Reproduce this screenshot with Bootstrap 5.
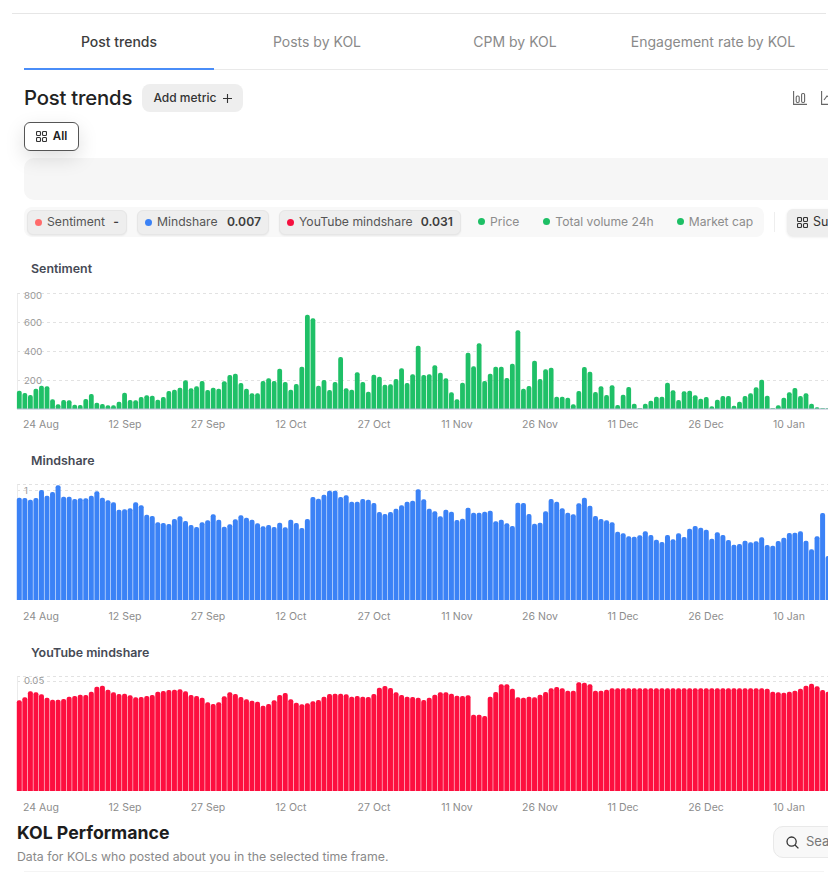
<!DOCTYPE html>
<html lang="en">
<head>
<meta charset="utf-8">
<title>Post trends</title>
<link href="https://cdn.jsdelivr.net/npm/bootstrap@5.3.0/dist/css/bootstrap.min.css" rel="stylesheet">
<style>
html,body{height:881px;overflow:hidden;background:#fff}
body{font-family:Inter,"Liberation Sans",sans-serif;color:#1f1f1f}
.page-wrap{width:828px;height:881px;overflow:hidden;padding-top:13px}
.top-rule{height:1px;background:#e6e6e6;margin-left:12px;margin-right:2px}
.tab-row{margin-left:24px;height:56px;border-bottom:1px solid #e9e9e9;flex-wrap:nowrap;gap:8px;width:1100px}
.tab-item{flex:0 0 190px;text-align:center;font-size:14px;color:#8a8a8a;line-height:55px;height:56px;white-space:nowrap}
.tab-item.on{color:#3d3d3d;font-weight:500;border-bottom:2px solid #4a8df8}
.head-row{margin:13px 0 0 24px;height:30px}
.head-title{font-size:20.3px;font-weight:500;letter-spacing:-.2px;color:#222;line-height:30px;margin:0}
.add-btn{margin-left:10px;width:101px;height:28px;padding:0;background:#eee;border:0;border-radius:8px;font-size:12px;color:#333;font-weight:500}
.add-btn:hover{background:#eee}
.view-icons{position:absolute;left:769px;top:8px;gap:14px}
.all-btn{margin:9px 0 0 24px;width:55px;height:29px;padding:0;background:#fff;border:1px solid #555;border-radius:6px;font-size:11.5px;font-weight:600;color:#222;box-shadow:0 7px 20px rgba(0,0,0,.13);position:relative;z-index:2;gap:6px}
.all-btn:hover{background:#fff;border-color:#555;color:#222}
.blank-panel{margin:7px 0 0 24px;height:42px;background:#f6f6f6;border-radius:10px 0 0 10px}
.legend-row{margin:7px 0 0 24px;width:900px;height:30px}
.legend-strip{width:740px;height:30px;background:#f8f8f8;border-radius:8px;padding-left:3px;flex:none}
.metric-chip{height:25px;background:#eee;border:1px solid #e6e6e6;border-radius:6px;font-size:12.2px;color:#555;padding:0 7px;gap:5px;box-shadow:0 1px 2px rgba(0,0,0,.06);white-space:nowrap;flex:none}
.metric-chip b{font-weight:600;color:#3d3d3d}
.chip-a{width:100px}.chip-b{width:132px;margin-left:10px}.chip-c{width:182px;margin-left:10px}
.dot-mark{width:7px;height:7px;border-radius:50%;flex:none;display:inline-block}
.plain-metric{font-size:12.1px;color:#8c8c8c;gap:5px;white-space:nowrap;flex:none}
.price-metric{margin-left:17px}.total-metric{margin-left:24px}.cap-metric{margin-left:23px}
.legend-sep{width:1px;height:20px;background:#eee;margin:0 12px 0 10px;flex:none}
.sum-chip{height:27px;background:#eee;border-radius:6px;padding:0 10px;font-size:12.5px;color:#333;gap:5px;box-shadow:0 1px 3px rgba(0,0,0,.1);flex:none}
.chart-name{font-size:12.4px;font-weight:600;color:#464a55;line-height:20px;margin:0 0 0 31px}
.chart-box{display:block;width:828px;height:147px;margin-top:6px}
.chart-box text{font-family:Inter,"Liberation Sans",sans-serif;font-size:10.5px;fill:#8d8d8d}
.chart-box text.y-tick{font-size:9.6px;fill:#9a9a9a}
.sec-one{margin-top:22px}
.sec-next{margin-top:19px}
.sec-last{margin-top:19px}
.sec-last .chart-box{margin-top:5px}
.kol-row{margin:7px 0 0 17px;width:811px;height:36px}
.kol-title{font-size:17.7px;font-weight:700;color:#1d1d1d;line-height:22px;margin:0}
.kol-sub{font-size:12.3px;color:#8a8a8a;line-height:18px;margin:4px 0 0}
.search-box{position:absolute;left:773px;top:826px;width:100px;height:32px;background:#f8f8f8;border:1px solid #e9e9e9;border-radius:10px;font-size:13px;color:#777;padding-left:12px;gap:7px}
.end-rule{height:1px;background:#f4f4f4;margin:13px 4px 0 24px}
</style>
</head>
<body>
<div class="page-wrap position-relative">
  <div class="top-rule"></div>
  <nav class="tab-row d-flex">
    <div class="tab-item on">Post trends</div>
    <div class="tab-item">Posts by KOL</div>
    <div class="tab-item">CPM by KOL</div>
    <div class="tab-item">Engagement rate by KOL</div>
    <div class="tab-item">Impression rate by KOL</div>
  </nav>

  <div class="head-row d-flex align-items-center position-relative">
    <h1 class="head-title">Post trends</h1>
    <button class="btn add-btn" type="button">Add metric&nbsp;&nbsp;<svg width="9" height="9" viewBox="0 0 9 9" fill="none" stroke="#333" stroke-width="1.1"><path d="M4.5 0v9M0 4.5h9"/></svg></button>
    <div class="view-icons d-flex">
      <svg width="14" height="14" viewBox="0 0 14 14" fill="none" stroke="#666" stroke-width="1.1"><path d="M.6 0v13.4H14"/><rect x="3.2" y="5" width="3" height="6.5" rx="1.2"/><rect x="8.6" y="2.5" width="3" height="9" rx="1.2"/></svg>
      <svg width="14" height="14" viewBox="0 0 14 14" fill="none" stroke="#666" stroke-width="1.1"><path d="M.6 0v13.4H14"/><path d="M3 9l3-4 3 2 4-4"/></svg>
    </div>
  </div>

  <button class="btn all-btn d-flex align-items-center justify-content-center" type="button">
    <svg width="11" height="11" viewBox="0 0 11 11" fill="none" stroke="#333" stroke-width="1.1"><rect x=".5" y=".5" width="4" height="4" rx="1"/><rect x="6.5" y=".5" width="4" height="4" rx="1"/><rect x=".5" y="6.5" width="4" height="4" rx="1"/><rect x="6.5" y="6.5" width="4" height="4" rx="1"/></svg>All
  </button>

  <div class="blank-panel"></div>

  <div class="legend-row d-flex align-items-center">
    <div class="legend-strip d-flex align-items-center">
      <span class="metric-chip chip-a d-inline-flex align-items-center"><i class="dot-mark" style="background:#ff6b6b"></i>Sentiment<b class="ms-auto">-</b></span>
      <span class="metric-chip chip-b d-inline-flex align-items-center"><i class="dot-mark" style="background:#3b82f6"></i>Mindshare<b class="ms-auto">0.007</b></span>
      <span class="metric-chip chip-c d-inline-flex align-items-center"><i class="dot-mark" style="background:#f5103f"></i>YouTube mindshare<b class="ms-auto">0.031</b></span>
      <span class="plain-metric price-metric d-inline-flex align-items-center"><i class="dot-mark" style="background:#1dbf65"></i>Price</span>
      <span class="plain-metric total-metric d-inline-flex align-items-center"><i class="dot-mark" style="background:#1dbf65"></i>Total volume 24h</span>
      <span class="plain-metric cap-metric d-inline-flex align-items-center"><i class="dot-mark" style="background:#1dbf65"></i>Market cap</span>
    </div>
    <span class="legend-sep"></span>
    <span class="sum-chip d-inline-flex align-items-center">
      <svg width="11" height="11" viewBox="0 0 11 11" fill="none" stroke="#333" stroke-width="1.1"><rect x=".5" y=".5" width="4" height="4" rx="1"/><rect x="6.5" y=".5" width="4" height="4" rx="1"/><rect x=".5" y="6.5" width="4" height="4" rx="1"/><rect x="6.5" y="6.5" width="4" height="4" rx="1"/></svg>Summary
    </span>
  </div>

  <section class="sec-one">
    <h2 class="chart-name">Sentiment</h2>
    <svg class="chart-box" id="c1" viewBox="0 0 828 147"></svg>
  </section>
  <section class="sec-next">
    <h2 class="chart-name">Mindshare</h2>
    <svg class="chart-box" id="c2" viewBox="0 0 828 147"></svg>
  </section>
  <section class="sec-last">
    <h2 class="chart-name">YouTube mindshare</h2>
    <svg class="chart-box" id="c3" viewBox="0 0 828 147"></svg>
  </section>

  <div class="kol-row">
    <h2 class="kol-title">KOL Performance</h2>
    <p class="kol-sub">Data for KOLs who posted about you in the selected time frame.</p>
  </div>
  <div class="search-box d-flex align-items-center">
    <svg width="13" height="13" viewBox="0 0 13 13" fill="none" stroke="#333" stroke-width="1.3"><circle cx="5.6" cy="5.6" r="4.6"/><path d="M9 9l3.4 3.4"/></svg>Search
  </div>
  <div class="end-rule"></div>
</div>

<script src="https://cdn.jsdelivr.net/npm/bootstrap@5.3.0/dist/js/bootstrap.bundle.min.js"></script>
<script>
var LABELS=[["24 Aug",41],["12 Sep",125],["27 Sep",208],["12 Oct",291],["27 Oct",374],["11 Nov",457],["26 Nov",540],["11 Dec",623],["26 Dec",706],["10 Jan",789]];
var flat=[];for(var i=0;i<27;i++)flat.push(145);
var S=[407,414,420,401,392,394,433,448,435,436,449,450,432,417,443,447,451,451,440,413,435,436,426,421,422,434,426,408,404,398,376,400,394,378,405,398,401,379,360,356,384,401,415,415,378,370,378,341,381,404,387,335,179,190,392,375,405,381,306,400,404,352,381,410,359,365,389,388,372,340,384,358,
272,360,358,331,353,370,412,433,383,293,334,265,378,356,335,335,369,326,226,401,393,317,372,343,338,425,425,428,448,408,336,350,411,394,420,391,450,419,396,446,460,446,437,425,425,383,406,435,409,407,421,431,426,454,434,423,423,452,440,423,415,397,374,422,460,451,428,412,399,423,415,446,457,460,460];
var M=[143,144,149,144,120,137,126,106,140,140,147,145,145,137,124,143,151,157,179,178,175,157,166,194,198,217,219,222,207,199,213,225,231,217,211,193,209,230,223,208,196,203,209,220,229,225,231,218,232,209,219,234,207,141,146,134,122,122,141,136,155,155,147,149,159,186,192,186,176,166,155,152,
118,148,176,184,199,179,185,210,206,173,188,188,185,182,214,209,220,228,158,159,192,221,218,184,147,155,175,188,193,160,143,167,198,207,211,217,245,250,259,260,256,244,255,269,276,255,268,250,261,236,228,233,239,266,247,255,270,284,282,272,277,274,262,285,287,273,263,249,248,244,272,298,259,189,318];
var Y=[181,172,154,157,163,173,179,179,177,170,168,164,165,155,140,137,149,157,162,161,166,172,171,168,165,155,153,150,149,148,154,165,168,173,187,192,187,169,157,162,171,178,182,185,197,192,181,165,159,178,188,193,190,184,180,170,162,161,161,163,170,168,170,171,162,143,138,144,157,165,170,171,
173,180,173,164,157,157,161,167,168,166,224,224,228,170,156,133,133,146,172,173,170,172,164,156,145,141,145,152,152,127,128,133,152,152,149].concat(flat,[145,146,155,157,158,155,152,146,137,131,139,150,155,145]);
function draw(id,zoomTop,data,color,grids,yl,baseY,labelY,axisLine,w){
  var el=document.getElementById(id),svgTop=el.getBoundingClientRect().top,s='',base=baseY-svgTop;
  grids.forEach(function(g){s+='<line x1="17" x2="828" y1="'+(g-svgTop)+'" y2="'+(g-svgTop)+'" stroke="#e2e2e2" stroke-width="1" stroke-dasharray="3 3"/>';});
  s+='<line x1="17.5" x2="17.5" y1="'+(grids[0]-svgTop)+'" y2="'+base+'" stroke="#ebebeb" stroke-width="1"/>';
  yl.forEach(function(l){s+='<text class="y-tick" x="24" y="'+(l[1]-svgTop+3.5)+'">'+l[0]+'</text>';});
  data.forEach(function(t,i){
    var x=19.3+i*5.54-w/2,y=zoomTop+t/3-svgTop,h=base-y,r=Math.min(2,h);
    s+='<path fill="'+color+'" d="M'+x.toFixed(2)+' '+base+'V'+(y+r).toFixed(2)+'Q'+x.toFixed(2)+' '+y.toFixed(2)+' '+(x+r).toFixed(2)+' '+y.toFixed(2)+'H'+(x+w-r).toFixed(2)+'Q'+(x+w).toFixed(2)+' '+y.toFixed(2)+' '+(x+w).toFixed(2)+' '+(y+r).toFixed(2)+'V'+base+'Z"/>';
  });
  if(axisLine)s+='<line x1="17" x2="828" y1="'+base+'" y2="'+base+'" stroke="#b4b8d0" stroke-width="1"/>';
  LABELS.forEach(function(l){s+='<text x="'+l[1]+'" y="'+(labelY-svgTop+4)+'" text-anchor="middle">'+l[0]+'</text>';});
  el.innerHTML=s;
}
draw('c1',255,S,'#1fc067',[293.5,322.5,351.5,380.5],[['800',295],['600',322],['400',351],['200',380]],409,424,true,4.8);
draw('c2',450,M,'#3b82f6',[484.5,490.5],[['1',490]],600,616,false,5);
draw('c3',640,Y,'#fd0f3f',[676.5,681.5],[['0.05',680]],791,807,false,5);
</script>
</body>
</html>
